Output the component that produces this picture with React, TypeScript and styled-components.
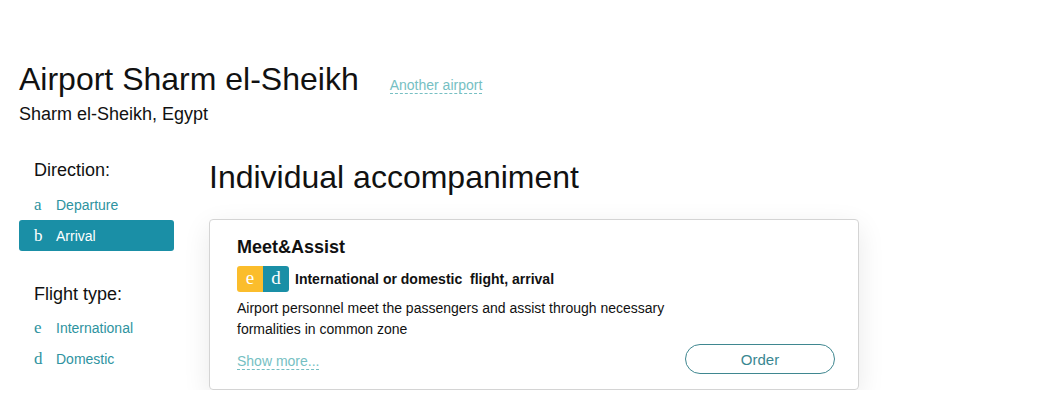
import React from 'react';
import styled, { createGlobalStyle } from 'styled-components';

const teal = '#1a8fa6';
const tealText = '#2e93a0';
const lightLink = '#76bfc3';
const yellow = '#fbbd2c';

const GlobalStyle = createGlobalStyle`
  html, body {
    margin: 0;
    padding: 0;
    background: #fff;
    font-family: "Liberation Sans", Arial, sans-serif;
    color: #111;
  }
`;

const Page = styled.div`
  padding: 61px 0 0 19px;
`;

const Header = styled.div`
  display: flex;
  align-items: baseline;
  gap: 31px;
`;

const Title = styled.h1`
  margin: 0;
  font-size: 32px;
  font-weight: normal;
  line-height: 37px;
`;

const DashedLink = styled.a`
  color: ${lightLink};
  font-size: 14px;
  text-decoration: none;
  border-bottom: 1px dashed ${lightLink};
  line-height: 16px;
  cursor: pointer;
`;

const Subtitle = styled.div`
  margin-top: 6px;
  font-size: 18px;
  line-height: 21px;
`;

const Body = styled.div`
  display: grid;
  grid-template-columns: 155px 650px;
  column-gap: 35px;
  margin-top: 34px;
`;

const Sidebar = styled.div`
  display: flex;
  flex-direction: column;
  padding-top: 1px;
`;

const GroupTitle = styled.div<{ $space?: number; $after?: number }>`
  padding-left: 15px;
  font-size: 18px;
  line-height: 21px;
  margin-top: ${(p) => p.$space ?? 0}px;
  margin-bottom: ${(p) => p.$after ?? 8}px;
`;

const Option = styled.div<{ $active?: boolean }>`
  display: flex;
  align-items: center;
  height: 31px;
  padding-left: 15px;
  border-radius: 3px;
  font-size: 14px;
  background: ${(p) => (p.$active ? teal : 'transparent')};
  color: ${(p) => (p.$active ? '#fff' : tealText)};
  cursor: pointer;
`;

const Letter = styled.span`
  width: 22px;
  font-family: "Liberation Serif", "DejaVu Serif", serif;
  font-size: 17px;
`;

const Main = styled.div`
  display: flex;
  flex-direction: column;
`;

const Heading = styled.h2`
  margin: 0;
  font-size: 32px;
  font-weight: normal;
  line-height: 37px;
`;

const Card = styled.div`
  margin-top: 23px;
  border: 1px solid #d4d4d4;
  border-radius: 4px;
  box-shadow: 0 8px 28px rgba(0, 0, 0, 0.09);
  padding: 17px 23px 15px 27px;
`;

const CardTitle = styled.div`
  font-size: 18px;
  font-weight: bold;
  line-height: 21px;
`;

const TagRow = styled.div`
  display: flex;
  align-items: center;
  gap: 6px;
  margin-top: 8px;
`;

const Badges = styled.div`
  display: flex;
  border-radius: 3px;
  overflow: hidden;
`;

const Badge = styled.span<{ $color: string }>`
  width: 26px;
  height: 26px;
  display: flex;
  align-items: center;
  justify-content: center;
  background: ${(p) => p.$color};
  color: #fff;
  font-family: "Liberation Serif", "DejaVu Serif", serif;
  font-size: 19px;
  padding-bottom: 2px;
  box-sizing: border-box;
`;

const TagText = styled.span`
  font-size: 14px;
  font-weight: bold;
  white-space: pre;
`;

const Description = styled.p`
  margin: 6px 0 0;
  max-width: 450px;
  font-size: 14px;
  line-height: 21px;
`;

const Footer = styled.div`
  display: flex;
  justify-content: space-between;
  align-items: flex-end;
  margin-top: 4px;
`;

const ShowMore = styled(DashedLink)`
  margin-bottom: 4px;
`;

const OrderButton = styled.button`
  width: 150px;
  height: 30px;
  border: 1px solid #3f8790;
  border-radius: 15px;
  background: #fff;
  color: #3a8791;
  font-family: "Liberation Sans", Arial, sans-serif;
  font-size: 15px;
  cursor: pointer;
`;

const directions = [
  { letter: 'a', label: 'Departure' },
  { letter: 'b', label: 'Arrival', active: true },
];

const flightTypes = [
  { letter: 'e', label: 'International' },
  { letter: 'd', label: 'Domestic' },
];

export default function App() {
  return (
    <>
      <GlobalStyle />
      <Page>
        <Header>
          <Title>Airport Sharm el-Sheikh</Title>
          <DashedLink>Another airport</DashedLink>
        </Header>
        <Subtitle>Sharm el-Sheikh, Egypt</Subtitle>

        <Body>
          <Sidebar>
            <GroupTitle>Direction:</GroupTitle>
            {directions.map((d) => (
              <Option key={d.label} $active={d.active}>
                <Letter>{d.letter}</Letter>
                {d.label}
              </Option>
            ))}
            <GroupTitle $space={33} $after={7}>
              Flight type:
            </GroupTitle>
            {flightTypes.map((d) => (
              <Option key={d.label}>
                <Letter>{d.letter}</Letter>
                {d.label}
              </Option>
            ))}
          </Sidebar>

          <Main>
            <Heading>Individual accompaniment</Heading>
            <Card>
              <CardTitle>Meet&amp;Assist</CardTitle>
              <TagRow>
                <Badges>
                  <Badge $color={yellow}>e</Badge>
                  <Badge $color={teal}>d</Badge>
                </Badges>
                <TagText>International or domestic  flight, arrival</TagText>
              </TagRow>
              <Description>
                Airport personnel meet the passengers and assist through necessary formalities in
                common zone
              </Description>
              <Footer>
                <ShowMore>Show more...</ShowMore>
                <OrderButton>Order</OrderButton>
              </Footer>
            </Card>
          </Main>
        </Body>
      </Page>
    </>
  );
}
